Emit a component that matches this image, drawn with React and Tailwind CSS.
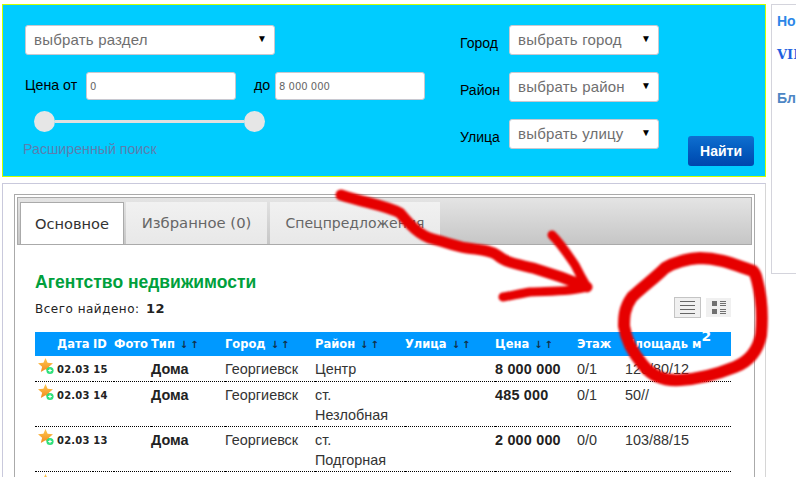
import React from 'react'

const sans = "font-['Liberation_Sans',Arial,sans-serif]"
const verdana = "font-['DejaVu_Sans',Verdana,sans-serif]"

const Select = ({ label, className }) => (
    <div className={`h-[30px] flex items-center justify-between pl-2 pr-[7px] bg-white rounded-[3px] border border-[#c8c8d0] text-[15px] tracking-[0.2px] text-[#6f6f6f] ${className}`}>
        <span>{label}</span>
        <span className="text-[10px] text-black -mt-1">▼</span>
    </div>
)

const Star = () => (
    <svg width="17" height="17" viewBox="0 0 17 17" className="shrink-0">
        <defs>
            <linearGradient id="starFill" x1="0" y1="0" x2="0" y2="1">
                <stop offset="0" stopColor="#ffc94d" />
                <stop offset="1" stopColor="#f28a1e" />
            </linearGradient>
        </defs>
        <path d="M7.5 0 L9.6 4.8 L15 5.3 L10.9 8.8 L12.2 14 L7.5 11.2 L2.8 14 L4.1 8.8 L0 5.3 L5.4 4.8 Z" fill="url(#starFill)" />
        <circle cx="12" cy="12.5" r="3.6" fill="#2ee07a" />
        <path d="M10.2 12.5 H13.8 M12 10.7 V14.3" stroke="#fff" strokeWidth="1.1" />
    </svg>
)

const Sort = () => <span className="ml-[5px] text-[10px] text-[#12304a] tracking-[2px] font-bold">↓↑</span>

const rows = [
    { date: '02.03 15', lines: ['Центр'], price: '8 000 000', floor: '0/1', area: '120/80/12', h: 'h-[25px]' },
    { date: '02.03 14', lines: ['ст.', 'Незлобная'], price: '485 000', floor: '0/1', area: '50//', h: 'h-[45px]' },
    { date: '02.03 13', lines: ['ст.', 'Подгорная'], price: '2 000 000', floor: '0/0', area: '103/88/15', h: 'h-[45px]' },
]

const Row = ({ row }) => (
    <tr className={`${row.h} border-b border-dotted border-black align-top text-[14.4px] leading-[20px] text-[#333]`}>
        <td colSpan="3" className="pl-[3px] pt-[2px]">
            <div className="flex items-start gap-[2px]">
                <Star />
                <span className={`${verdana} font-bold text-[10px] leading-[14px] text-[#222] mt-[5px] tracking-[0.2px]`}>{row.date}</span>
            </div>
        </td>
        <td className="font-bold pt-[3px] text-[#222]">Дома</td>
        <td className="pt-[3px]">Георгиевск</td>
        <td className="pt-[3px]">{row.lines.map(l => <div key={l}>{l}</div>)}</td>
        <td></td>
        <td className="font-bold pt-[3px] text-[#222] tracking-[0.2px]">{row.price}</td>
        <td className="pt-[3px]">{row.floor}</td>
        <td className="pt-[3px]">{row.area}</td>
    </tr>
)

const App = () => {
    return (
        <div className={`${sans} relative w-[796px] h-[477px] overflow-hidden bg-white flex items-start pt-1 pl-[2px]`}>
            <div className="w-[764px] shrink-0">
                {/* Search panel */}
                <div className="h-[173px] bg-[#00ccff] border border-[#ccff00] pl-[22px] pt-5 pr-[10px] flex">
                    <div className="w-[400px] shrink-0">
                        <Select label="выбрать раздел" className="w-[250px]" />
                        <div className="flex items-center mt-[17px] h-[28px] text-[14.2px] text-black">
                            <span className="w-[61px]">Цена от</span>
                            <input readOnly value="0" className={`${verdana} w-[150px] h-[28px] bg-white rounded-[3px] border border-[#c8c8d0] pl-[3px] text-[10px] text-[#666]`} />
                            <span className="ml-[18px] w-[21px]">до</span>
                            <input readOnly value="8 000 000" className={`${verdana} w-[150px] h-[28px] bg-white rounded-[3px] border border-[#c8c8d0] pl-[3px] text-[10px] text-[#666]`} />
                        </div>
                        <div className="flex items-center w-[231px] ml-[9px] mt-[11px]">
                            <div className="w-[21px] h-[21px] rounded-full bg-[#e6e6e6] shrink-0"></div>
                            <div className="flex-1 h-[3px] bg-[#e0e0e0]"></div>
                            <div className="w-[21px] h-[21px] rounded-full bg-[#e6e6e6] shrink-0"></div>
                        </div>
                        <div className="text-[14.2px] leading-[20px] text-[#5b7fb0] -ml-[2px] mt-[7px]">Расширенный поиск</div>
                    </div>
                    <div className="ml-[35px] w-[199px] shrink-0 flex flex-col gap-[17px]">
                        {[['Город', 'выбрать город'], ['Район', 'выбрать район'], ['Улица', 'выбрать улицу']].map(([name, text]) => (
                            <div key={name} className="flex items-center">
                                <span className="w-[49px] text-[14px] text-black mt-[7px]">{name}</span>
                                <Select label={text} className="w-[150px]" />
                            </div>
                        ))}
                    </div>
                    <div className="ml-[29px] mt-[111px]">
                        <button className="w-[66px] h-[30px] rounded-[3px] bg-gradient-to-b from-[#0f6fd0] to-[#0046ad] text-white text-[14px] font-bold">Найти</button>
                    </div>
                </div>

                {/* Listing */}
                <div className="mt-[6px] h-[300px] bg-white border border-[#c9c9dc] border-r-[#d6d6d6] px-[11px] pt-[10px]">
                    <div className="w-[741px] border border-[#aaa] p-[2px] pb-0 h-[300px]">
                        <div className={`h-[48px] w-[735px] border border-[#aaa] bg-gradient-to-b from-[#e4e4e4] to-[#c6c6c6] pl-[2px] pt-[4px] flex gap-[2px] ${verdana}`}>
                            <div className="w-[104px] h-[42px] bg-white border border-[#aaa] border-b-0 flex items-center justify-center text-[14.6px] text-[#333]">Основное</div>
                            <div className="w-[141px] h-[42px] bg-gradient-to-b from-[#f1f1f1] to-[#e8e8e8] flex items-center justify-center text-[14.8px] text-[#666]">Избранное (0)</div>
                            <div className="ml-[1px] w-[170px] h-[42px] bg-gradient-to-b from-[#f1f1f1] to-[#e8e8e8] flex items-center justify-center text-[14px] text-[#666]">Спецпредложения</div>
                        </div>
                        <div className="pl-[18px] pr-[21px]">
                            <h2 className="mt-[25px] text-[17.5px] leading-[24px] font-bold text-[#00a03c]">Агентство недвижимости</h2>
                            <div className="flex items-center justify-between mt-[4px] h-[22px]">
                                <div className={`${verdana} text-[12px] tracking-[0.5px] text-[#222]`}>Всего найдено: <b className="text-[13px] ml-[2px]">12</b></div>
                                <div className="flex items-center gap-[5px] -mt-[3px]">
                                    <div className="w-[27px] h-[21px] bg-[#f0f0f0] border border-[#c4c4c4] flex flex-col justify-center gap-[3px] px-[5px]">
                                        <div className="h-px bg-[#666]"></div>
                                        <div className="h-px bg-[#666]"></div>
                                        <div className="h-px bg-[#666]"></div>
                                        <div className="h-px bg-[#666]"></div>
                                    </div>
                                    <div className="w-[25px] h-[19px] bg-[#f0f0f0] flex items-center justify-center">
                                        <svg width="14" height="14" viewBox="0 0 14 14">
                                            <rect x="0" y="0" width="5" height="5" fill="#707070" />
                                            <rect x="0" y="8" width="5" height="5" fill="#707070" />
                                            <path d="M8 .5H14M8 2.5H14M8 4.5H14M8 8.5H14M8 10.5H14M8 12.5H14" stroke="#707070" strokeWidth="1" />
                                        </svg>
                                    </div>
                                </div>
                            </div>
                            <table className="mt-[12px] w-[696px] table-fixed border-collapse">
                                <colgroup>
                                    <col className="w-[58px]" />
                                    <col className="w-[21px]" />
                                    <col className="w-[37px]" />
                                    <col className="w-[74px]" />
                                    <col className="w-[90px]" />
                                    <col className="w-[90px]" />
                                    <col className="w-[90px]" />
                                    <col className="w-[82px]" />
                                    <col className="w-[48px]" />
                                    <col className="w-[106px]" />
                                </colgroup>
                                <thead>
                                    <tr className={`${verdana} h-[24px] bg-[#0099ff] text-white text-[11.5px] leading-[14px] font-bold text-left`}>
                                        <th className="pl-[22px]">Дата</th>
                                        <th>ID</th>
                                        <th>Фото</th>
                                        <th>Тип<Sort /></th>
                                        <th>Город<Sort /></th>
                                        <th>Район<Sort /></th>
                                        <th>Улица<Sort /></th>
                                        <th>Цена<Sort /></th>
                                        <th>Этаж</th>
                                        <th className="whitespace-nowrap">Площадь м<sup className="text-[14px]">2</sup></th>
                                    </tr>
                                </thead>
                                <tbody>
                                    {rows.map(row => <Row key={row.date} row={row} />)}
                                    <tr>
                                        <td colSpan="3" className="pl-[3px] pt-[2px]"><Star /></td>
                                    </tr>
                                </tbody>
                            </table>
                        </div>
                    </div>
                </div>
            </div>

            {/* Right column, cut off by the window */}
            <div className="ml-[5px] w-[120px] shrink-0 h-[270px] bg-white border border-[#d4d4dc] pl-[5px] pt-[7px] font-bold">
                <div className="text-[14px] leading-[18px] text-[#2b86e8]">Новости</div>
                <div className="mt-[17px] font-['DejaVu_Serif',serif] text-[13px] leading-[16px] text-[#1f5fe0]">VIP</div>
                <div className="mt-[26px] text-[14px] leading-[18px] text-[#4d86c4]">Блог</div>
            </div>

            {/* Red marker scribbles drawn over the page */}
            <svg className="absolute left-0 top-0 pointer-events-none" width="796" height="477" viewBox="0 0 796 477" fill="none">
                <g stroke="#e60000" strokeLinecap="round" strokeLinejoin="round" className="blur-[1px]">
                    <path strokeWidth="11" d="M341 195 C365 203 385 205 400 213 C410 225 420 236 433 239 C445 242 455 246 467 248 C480 250 490 250 497 255 C505 262 515 264 533 268 C550 273 570 280 587 287" />
                    <path strokeWidth="9" d="M552 235 C562 245 570 258 575 265 C580 275 584 282 587 287 C570 292 550 291 530 292 C518 294 510 296 503 297" />
                    <path strokeWidth="12" d="M753 271 C735 265 720 258 700 258 C685 259 675 262 665 268 C655 278 645 285 632 297 C624 308 624 318 624 326 C626 340 632 352 643 365 C652 376 665 381 680 380 C700 379 720 373 735 367 C750 361 758 350 761 335 C763 315 761 295 757 280 C756 275 755 273 753 271 Z" />
                </g>
            </svg>
        </div>
    )
}

export default App
